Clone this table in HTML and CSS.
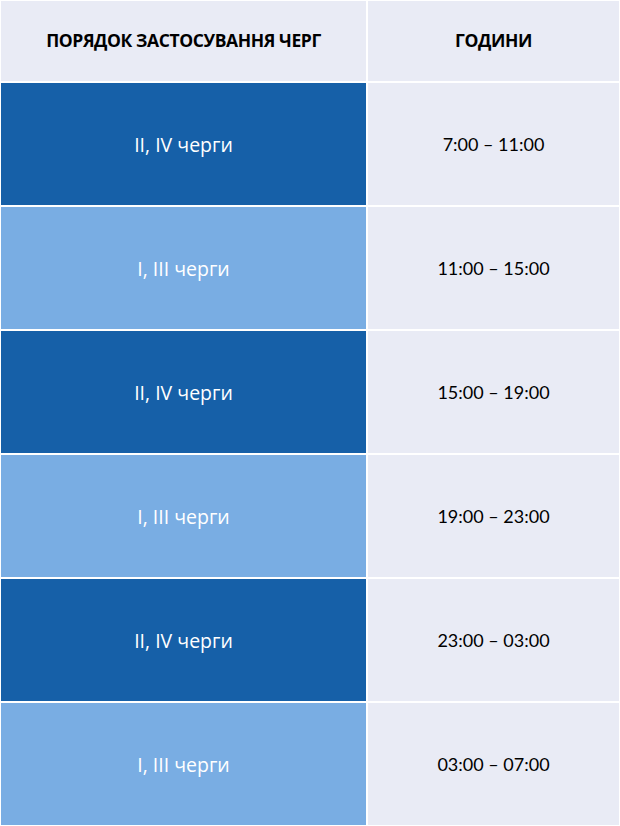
FILE: index.html
```html
<!DOCTYPE html>
<html lang="uk">
<head>
<meta charset="utf-8">
<link rel="stylesheet" href="styles.css">
</head>
<body>
<div class="table">
  <div class="cell head">ПОРЯДОК ЗАСТОСУВАННЯ ЧЕРГ</div>
  <div class="cell head">ГОДИНИ</div>
  <div class="cell q dark">II, IV черги</div>
  <div class="cell t">7:00 – 11:00</div>
  <div class="cell q light">I, III черги</div>
  <div class="cell t">11:00 – 15:00</div>
  <div class="cell q dark">II, IV черги</div>
  <div class="cell t">15:00 – 19:00</div>
  <div class="cell q light">I, III черги</div>
  <div class="cell t">19:00 – 23:00</div>
  <div class="cell q dark">II, IV черги</div>
  <div class="cell t">23:00 – 03:00</div>
  <div class="cell q light">I, III черги</div>
  <div class="cell t">03:00 – 07:00</div>
</div>
</body>
</html>
```
FILE: styles.css
```css
html, body {
  margin: 0;
  padding: 0;
  background: #ffffff;
}
.table {
  width: 620px;
  height: 826px;
  box-sizing: border-box;
  padding: 1px;
  display: grid;
  grid-template-columns: 365px 251px;
  grid-template-rows: 80px repeat(6, 122px);
  column-gap: 2px;
  row-gap: 2px;
}
.cell {
  display: flex;
  align-items: center;
  justify-content: center;
  background: #e9ebf5;
}
.head {
  font-family: "Open Sans", sans-serif;
  font-weight: 700;
  font-size: 17.5px;
  color: #000;
  letter-spacing: -0.4px;
  padding-bottom: 2px;
}
.q {
  font-family: "Open Sans", sans-serif;
  font-size: 19.5px;
  color: #fff;
}
.dark { background: #1660a8; }
.light { background: #79ade3; }
.t {
  font-family: "Lato", sans-serif;
  font-size: 18px;
  color: #000;
}
```
